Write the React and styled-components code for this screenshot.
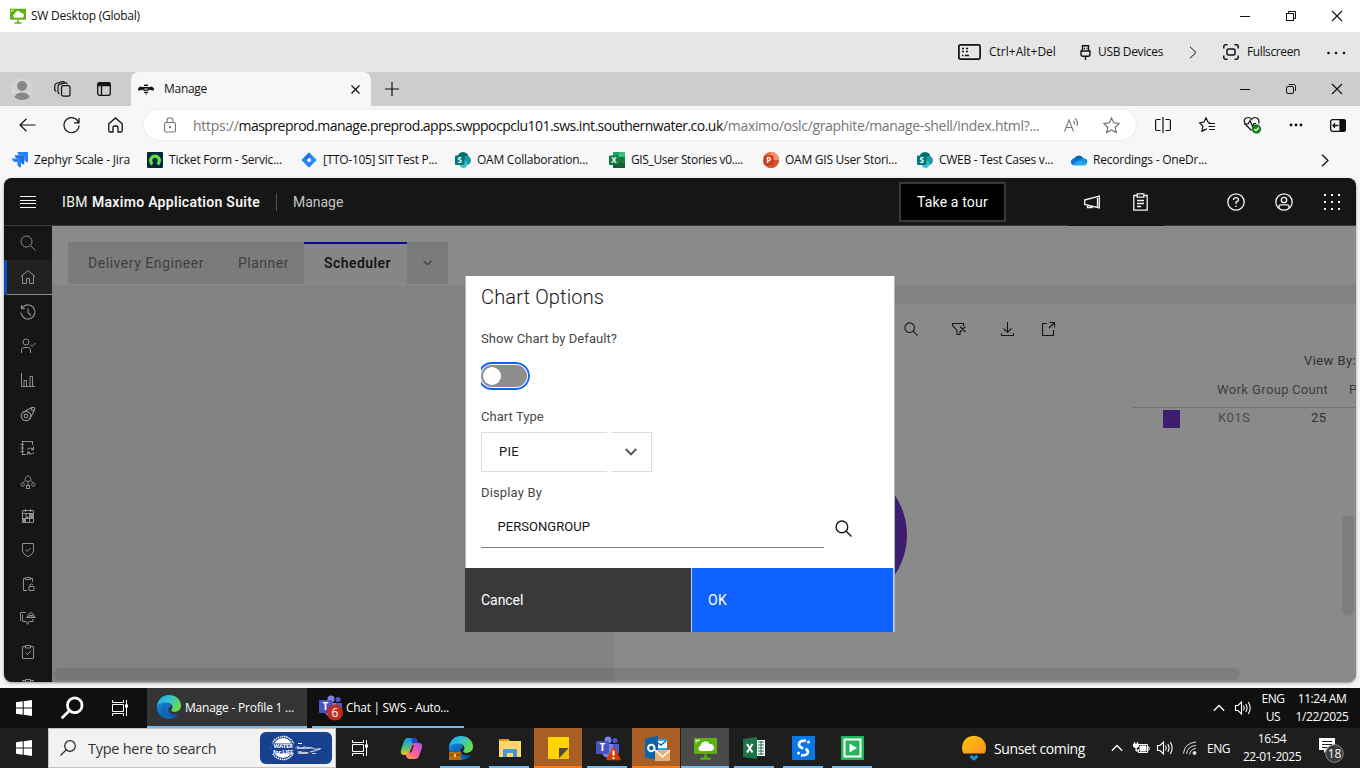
import React from 'react';
import styled, { createGlobalStyle } from 'styled-components';

const Global = createGlobalStyle`
  * { box-sizing: border-box; }
  body { margin: 0; overflow: hidden; background: #f7f7f7; }
`;
const ui = '"Open Sans", "Segoe UI", sans-serif';
const plex = 'Roboto, "IBM Plex Sans", sans-serif';

const Screen = styled.div`
  width: 1360px; height: 768px; display: flex; flex-direction: column;
  font-family: ${ui}; font-size: 12px; color: #111; overflow: hidden;
`;
const Label = styled.span`
  flex: none; display: block; white-space: nowrap;
  width: ${p => (p.$w ? p.$w + 'px' : 'auto')};
  margin-left: ${p => p.$ml || 0}px;
  padding-bottom: ${p => p.$pb || 0}px;
  letter-spacing: ${p => p.$ls || 0}px;
  font-size: ${p => p.$size || 12}px;
  font-weight: ${p => p.$weight || 400};
  color: ${p => p.$color || 'inherit'};
`;
const Cell = styled.div`
  flex: none; width: ${p => p.$w}px; height: 100%; margin-left: ${p => p.$ml || 0}px;
  display: flex; align-items: center; justify-content: center;
`;
const Spacer = styled.div`flex: 1;`;
const Svg = styled.svg`display: block; flex: none; overflow: visible; margin-left: ${p => p.$ml || 0}px;`;

function Icon({ w = 16, h = w, vb, sw = 1, color = 'currentColor', ml, children }) {
  return (
    <Svg $ml={ml} width={w} height={h} viewBox={vb || `0 0 ${w} ${h}`} fill="none" stroke={color} strokeWidth={sw}>
      {children}
    </Svg>
  );
}

/* ---------- window chrome icons ---------- */
const Minimize = () => <Icon w={10}><path d="M0 5.5H10" /></Icon>;
const Restore = ({ round }) => (
  <Icon w={10}><rect x=".5" y="2.5" width="7" height="7" rx={round ? 1.5 : 0} /><path d={round ? 'M2.8 .5H7.5Q9.5 .5 9.5 2.5V7' : 'M2.5 2.5V.5H9.5V7.5H7.5'} /></Icon>
);
const Close = () => <Icon w={10} sw={1.1}><path d="M0 0L10 10M10 0L0 10" /></Icon>;
const Citrix = ({ s = 16 }) => (
  <Icon w={s} vb="0 0 16 16">
    <path d="M0 .7h16v11H0z" fill="#5fb30f" stroke="none" />
    <path d="M4.500 9.700a1.900 1.900 0 0 1 .2-3.700A3.300 3.300 0 0 1 11 5a2.400 2.400 0 0 1 1 4.700z" fill="#fff" stroke="none" />
    <path d="M1.500 4V2.300H4" stroke="#fff" strokeWidth=".8" />
    <path d="M8 12v2.500M4.500 15h7" stroke="#5fb30f" strokeWidth="1.600" />
  </Icon>
);
const ChevronRight = () => <Icon w={8} h={13} sw={1.300}><path d="M1 .8L7 6.500L1 12.200" /></Icon>;
const ChevronUp = () => <Icon w={12} h={8} sw={1.300}><path d="M.8 6.800L6 1.500L11.200 6.800" /></Icon>;

/* ---------- Citrix window bars ---------- */
const TitleBar = styled.div`height: 32px; flex: none; background: #fff; display: flex; align-items: center; padding-left: 10px;`;
const SessionBar = styled.div`height: 40px; flex: none; background: #e6e6e6; display: flex; align-items: center; padding-left: 958px;`;

/* ---------- browser ---------- */
const TabStrip = styled.div`height: 34px; flex: none; background: #cdcdcd; display: flex; align-items: center; padding-left: 2px;`;
const Avatar = styled.div`width: 22px; height: 22px; border-radius: 50%; background: #d5d3d1; overflow: hidden;`;
const Tab = styled.div`
  width: 240px; height: 34px; margin-left: 7px; background: #f7f7f7; border-radius: 8px 8px 0 0;
  display: flex; align-items: center; padding-left: 7px;
`;
const NavBar = styled.div`height: 38px; flex: none; background: #f7f7f7; display: flex; align-items: center; padding-left: 5px;`;
const Address = styled.div`
  width: 992px; height: 30px; margin: 0 5px 0 7px; border-radius: 15px; background: #fff;
  box-shadow: 0 0 3px rgba(0,0,0,.1); display: flex; align-items: center; padding-left: 18px; color: #767676;
`;
const Bookmarks = styled.div`height: 34px; flex: none; background: #f7f7f7; display: flex; align-items: center; padding: 0 0 2px 12px;`;
const Bookmark = styled.div`width: ${p => p.$w || 154}px; display: flex; align-items: center; gap: 6px;`;

const JiraScale = () => (
  <Icon w={16}><g stroke="none" fill="#2684ff"><path d="M5.500 0H16V10.400A4 4 0 0 1 12.200 6.600V3.800H9.500A4 4 0 0 1 5.500 0z" /><path d="M2.700 3.300H12.200V12.600A4 4 0 0 1 8.700 9V6.900H6.500A4 4 0 0 1 2.700 3.300z" fill="#1f6fe5" /><path d="M0 6.500H9V15.500A4 4 0 0 1 5.400 12V10.100H3.500A4 4 0 0 1 0 6.500z" /></g></Icon>
);
const TicketLogo = () => (
  <Icon w={16}><rect width="16" height="16" rx="1" fill="#04283a" stroke="none" /><path d="M5.500 12.200A4.400 4.400 0 1 1 10.500 12.200" stroke="#63df4e" strokeWidth="3.200" /></Icon>
);
const JiraDiamond = () => (
  <Icon w={16}><path d="M8 .3L15.700 8L8 15.700L.3 8z" fill="#2684ff" stroke="none" /><path d="M8 5.500L10.500 8L8 10.500L5.500 8z" fill="#fff" stroke="none" /><path d="M8 1.500V5.500L5.500 8L4 6.500z" fill="#1868db" stroke="none" /></Icon>
);
const Letter = styled.text`font: 700 ${p => p.$s || 8}px ${ui}; fill: #fff; stroke: none; text-anchor: middle;`;
const SharePoint = () => (
  <Icon w={16}><g stroke="none"><circle cx="8" cy="5.500" r="5.500" fill="#036c70" /><circle cx="11.500" cy="8.500" r="4.500" fill="#1a9ba1" /><circle cx="8.500" cy="12.300" r="3.700" fill="#37c6d0" /><rect y="3.500" width="9.500" height="9.500" rx=".8" fill="#03787c" /></g><Letter x="4.800" y="11.200">S</Letter></Icon>
);
const Excel = () => (
  <Icon w={16}><g stroke="none"><path d="M4 0h12v16H4z" fill="#21a366" /><path d="M10 0h6v5h-6z" fill="#33c481" /><path d="M4 11h12v5H4z" fill="#185c37" /><path d="M10 5h6v6h-6z" fill="#107c41" /><rect y="3.500" width="9.500" height="9.500" rx=".8" fill="#107c41" /></g><Letter x="4.800" y="11.200">X</Letter></Icon>
);
const PowerPoint = () => (
  <Icon w={16}><g stroke="none"><circle cx="8" cy="8" r="8" fill="#ed6c47" /><path d="M8 0a8 8 0 0 1 8 8H8z" fill="#ff8f6b" /><path d="M0 8h16A8 8 0 0 1 0 8z" fill="#d35230" /><rect x="1" y="3.500" width="9.500" height="9.500" rx=".8" fill="#c43e1c" /></g><Letter x="5.800" y="11.200">P</Letter></Icon>
);
const OneDrive = () => (
  <Icon w={16}><g stroke="none"><path d="M1.500 11a3.500 3.500 0 0 1 2-5A5 5 0 0 1 12.300 6.200L12 9z" fill="#0364b8" /><path d="M7 8L12.500 6.200a3.500 3.500 0 0 1 3 5.800z" fill="#1490df" /><path d="M2.800 13.500A2.600 2.600 0 0 1 1 9.500L7.500 8L15.500 11.700A2.600 2.600 0 0 1 13.500 13.500z" fill="#28a8ea" /><path d="M.5 12a3.500 3.500 0 0 1 3-5.500L8 8.200L2 12.800z" fill="#0a78d4" /></g></Icon>
);
const bookmarks = [
  [JiraScale, 'Zephyr Scale - Jira', -0.16, 135],
  [TicketLogo, 'Ticket Form - Servic...', -0.21],
  [JiraDiamond, '[TTO-105] SIT Test P...', -0.29],
  [SharePoint, 'OAM Collaboration...', -0.24],
  [Excel, 'GIS_User Stories v0....', -0.36],
  [PowerPoint, 'OAM GIS User Stori...', -0.25],
  [SharePoint, 'CWEB - Test Cases v...', -0.3],
  [OneDrive, 'Recordings - OneDr...', -0.22],
];

/* ---------- Maximo application ---------- */
const Viewport = styled.div`height: 510px; flex: none; background: #f4f4f4; padding: 0 4px;`;
const Application = styled.div`
  height: 504px; border-radius: 8px; overflow: hidden; background: #8a8a8a; font-family: ${plex};
  box-shadow: 0 1px 3px rgba(0,0,0,.4); position: relative;
`;
const Header = styled.div`height: 48px; background: #161616; box-shadow: inset 0 -1px #393939; color: #f4f4f4; display: flex; align-items: center;`;
const HeaderAction = styled(Cell)`width: 48px; background: ${p => (p.$solid ? '#161616' : 'transparent')};`;
const Divider = styled.div`width: 1px; height: 18px; background: #525252; margin-left: 16px;`;
const TourButton = styled.div`
  width: 107px; height: 40px; border: 2px solid #393939; background: #000; color: #fff;
  display: flex; align-items: center; padding-left: 16px; margin-left: 556px;
`;
const Body = styled.div`display: flex; height: 456px;`;
const Sidebar = styled.div`width: 48px; flex: none; background: #161616; color: #8f8f8f; overflow: hidden;`;
const SideItem = styled.div`
  height: ${p => (p.$active ? 35 : 34)}px; display: flex; align-items: center; justify-content: center;
  padding-bottom: ${p => (p.$active ? 2 : 0)}px;
  background: ${p => (p.$active ? '#212121' : 'transparent')};
  box-shadow: ${p => (p.$active ? 'inset 3px 0 #0f4bc0, inset 0 -1px #8d8d8d' : 'none')};
`;
const Content = styled.div`flex: 1; min-width: 0; background: #828282; position: relative; display: flex; flex-direction: column;`;
const TabArea = styled.div`height: 59px; flex: none; background: #8a8a8a; padding: 16px 0 0 16px;`;
const TabRow = styled.div`width: 380px; height: 42px; display: flex; background: #7b7b7b;`;
const PageTab = styled.div`
  width: ${p => p.$w}px; height: 42px; display: flex; align-items: center; padding: 0 0 2px 20px;
  color: ${p => (p.$active ? '#161616' : '#3f3f3f')};
  background: ${p => (p.$active ? '#868686' : 'transparent')};
  border-top: 2px solid ${p => (p.$active ? '#080899' : 'transparent')};
`;
const Panels = styled.div`flex: 1; display: flex; padding-top: 19px;`;
const LeftPanel = styled.div`width: 562px; flex: none;`;
const ChartPanel = styled.div`flex: 1; min-width: 0; background: #8a8a8a; overflow: hidden;`;
const ChartTools = styled.div`height: 50px; display: flex; color: #161616; padding-left: 286px;`;
const ChartArea = styled.div`display: flex; height: 328px;`;
const PieBox = styled.div`width: 518px; flex: none; padding: 110px 0 0 150.5px;`;
const Pie = styled.div`width: 142px; height: 142px; border-radius: 50%; background: #3f1d70;`;
const Legend = styled.div`width: 224px; overflow: hidden; color: #303030; font-size: 13px;`;
const ViewBy = styled.div`height: 15px; display: flex; align-items: center; padding: 0 0 2px 172px; margin-bottom: 13px;`;
const LegendHead = styled.div`height: 26px; display: flex; align-items: center; padding: 0 0 10px 85px; border-bottom: 1px solid #757575; margin-top: 2px; color: #3d3d3d;`;
const LegendRow = styled.div`height: 22px; display: flex; align-items: center; padding-left: 31px;`;
const Swatch = styled.div`width: 17px; height: 18px; background: #3f1d70;`;
const HScroll = styled.div`position: absolute; left: 2px; bottom: 2px; width: 1186px; height: 12px; border-radius: 6px; background: rgba(0,0,0,.09);`;
const VScroll = styled.div`position: absolute; right: 2px; top: 289px; width: 12px; height: 101px; border-radius: 6px; background: rgba(0,0,0,.09);`;

const Dialog = styled.div`
  position: absolute; left: 461px; top: 98px; width: 430px; height: 356px; background: #fff;
  border: solid #b5b5b5; border-width: 0 1px; display: flex; flex-direction: column;
`;
const DialogBody = styled.div`height: 292px; padding: 6px 0 0 15px;`;
const DialogTitle = styled.div`height: 30px; display: flex; align-items: center; color: #161616;`;
const FieldLabel = styled.div`height: 20px; display: flex; align-items: center; color: #484848; margin-top: ${p => p.$mt}px;`;
const Toggle = styled.div`
  width: 49px; height: 28px; margin-top: 14px; overflow: hidden; border-radius: 0 14px 14px 0;
  display: flex; justify-content: flex-end;
`;
const ToggleTrack = styled.div`
  flex: none; width: 52px; height: 28px; border-radius: 14px; border: 2px solid #0f62fe; padding: 1px;
`;
const ToggleFill = styled.div`height: 22px; border-radius: 11px; background: #8d8d8d; padding: 2px 0 0 1px;`;
const Knob = styled.div`width: 18px; height: 18px; border-radius: 50%; background: #fff; margin-left: 1px;`;
const SelectBox = styled.div`width: 171px; height: 40px; margin-top: 6px; display: flex; gap: 4px;`;
const SelectValue = styled.div`width: 126px; border: 1px solid #dcdcdc; border-right: 0; display: flex; align-items: center; padding: 0 0 2px 17px; color: #161616;`;
const SelectArrow = styled.div`width: 41px; border: 1px solid #dcdcdc; border-left: 0; display: flex; align-items: center; justify-content: center; color: #525252;`;
const Lookup = styled.div`display: flex; margin-top: 6px; align-items: center; color: #161616;`;
const LookupInput = styled.div`width: 343px; height: 40px; border-bottom: 1px solid #7d7d7d; display: flex; align-items: center; padding: 0 0 3px 16.5px;`;
const DialogFooter = styled.div`height: 64px; display: flex; gap: 1px; margin-left: -1px; background: #b9cff8;`;
const DialogButton = styled.div`
  width: ${p => p.$w}px; padding: 0 0 1px 16px; display: flex; align-items: center; color: #fff;
  background: ${p => (p.$primary ? '#0f62fe' : '#393939')};
`;

const Search = ({ s = 16, sw = 1 }) => <Icon w={s} vb="0 0 16 16" sw={sw}><circle cx="6.500" cy="6.500" r="5.500" /><path d="M10.500 10.500L15.500 15.500" /></Icon>;
const sideIcons = [
  <Search />,
  <Icon w={16}><path d="M1 7.500L8 1.500L15 7.500M2.500 6.500V14.500H6.500V9.500H9.500V14.500H13.500V6.500" /></Icon>,
  <Icon w={16} sw={1.200}><path d="M2.200 4A7 7 0 1 1 1 8.500M1.500 1V4.500H5M8 4.500V8.500L11 11.500" /></Icon>,
  <Icon w={16}><circle cx="6" cy="4" r="3" /><path d="M1.500 15V12Q1.500 9.500 4 9.500H8Q10.500 9.500 10.500 12V15M10 6.500L12 8.500L15.500 5" /></Icon>,
  <Icon w={16}><path d="M1.500 1V14.500H15M4 14V8.500H6.500V14M10 14V4.500H12.500V14" /></Icon>,
  <Icon w={16} sw={1.200}><circle cx="6" cy="10" r="4.700" /><circle cx="6" cy="10" r="1.800" /><circle cx="13" cy="3" r="1.700" /><path d="M3 6.300L11.700 1.500M9.600 13L14.500 4" /></Icon>,
  <Icon w={16} sw={1.100}><path d="M12.500 5V1.500H2.500V14.500H6M.5 4.500H4M.5 8H4M.5 11.500H4M7.500 9.500Q10 6.500 13.300 9.500M13.500 6.500V9.800H11M14 12.500Q11.500 15.500 8 12.500M7.700 15V12H10" /></Icon>,
  <Icon w={16}><path d="M5 5.500Q5 3.500 8 1.500Q11 3.500 11 5.500Q10 7.500 8 7.500Q5.500 7.500 5 5.500M8 7.500V11M5 6.500L3.500 8.500M11 6.500L12.500 8.500" /><circle cx="2.700" cy="10.500" r="1.700" /><circle cx="13.300" cy="10.500" r="1.700" /><rect x="6.500" y="11.500" width="3" height="3" /></Icon>,
  <Icon w={16}><path d="M2.500 2.500H13.500V14.500H2.500zM5.500 1V4M10.500 1V4M2.500 5.500H13.500" /><path d="M9 6h4v5H9zM5.500 8.500h3v2h-3zM3 11h3v3H3z" fill="currentColor" stroke="none" /><path d="M3 10.500H13M6 6V8M9.500 11V14" /></Icon>,
  <Icon w={16}><path d="M2.500 1.500H13.500V9Q13 12.500 8 14.700Q3 12.500 2.500 9zM5.500 7.500L7.300 9.300L10.500 6" /></Icon>,
  <Icon w={16}><path d="M5.500 2.500H3.500V14.500H7M10.500 2.500H12.500V6M5.500 1.500H10.500V3.500H5.500zM9 10.500H14V14.500H9zM10 10V8.700Q11.500 7 13 8.700" /></Icon>,
  <Icon w={16}><path d="M6 2.500H.5V11M2.500 4.500V11.500H6.500L7.500 14.500L9 11.500H13V9M6 7.500H15.500M7.500 7Q7.500 3.500 11 2.500Q14 3.500 14.500 7zM9 5.500H13" /></Icon>,
  <Icon w={16}><path d="M5 2.500H2.500V14.500H13.500V2.500H11M5.500 1.500H10.500V4H5.500zM5.500 8.500L7.300 10.500L11 7" /></Icon>,
  <Icon w={16}><path d="M5 2.500H2.500V14.500H13.500V2.500H11M5.500 1.500H10.500V4H5.500z" /></Icon>,
];

/* ---------- taskbars ---------- */
const Taskbar = styled.div`height: 40px; flex: none; display: flex; align-items: center; color: #fff; background: ${p => p.$bg};`;
const TaskButton = styled.div`
  width: ${p => p.$w}px; height: 40px; margin-left: ${p => p.$ml}px; display: flex; align-items: center; padding-left: ${p => p.$pl}px;
  background: ${p => (p.$active ? '#343434' : 'transparent')}; border-bottom: 2px solid #76b9ed;
`;
const PinnedApp = styled.div`
  width: 49px; height: 40px; flex: none; display: flex; align-items: center; justify-content: center; position: relative;
  background: linear-gradient(to right, ${p => p.$bg || 'transparent'} 48px, transparent 48px);
  &::after {
    content: ''; position: absolute; bottom: 0; height: 2px;
    left: ${p => (p.$bg ? 0 : 4)}px; right: ${p => (p.$bg ? 1 : 5)}px; background: ${p => p.$line || 'transparent'};
  }
`;
const SearchBox = styled.div`
  width: 288px; height: 40px; background: #f2f2f2; border: 1px solid #c4c4c4; color: #333;
  display: flex; align-items: center; padding-left: 11px;
`;
const WaterBadge = styled.div`
  width: 72px; height: 32px; border-radius: 6px; background: #17418f; margin-left: 44px; display: flex; align-items: center; padding-left: 10px;
`;
const Stack = styled.div`
  width: ${p => p.$w}px; margin-left: ${p => p.$ml || 0}px; flex: none; line-height: 18px; text-align: center;
  letter-spacing: -.45px; white-space: nowrap; display: flex; flex-direction: column; align-items: center;
`;
const Count = styled.text`font: 12px ${ui}; fill: #fff; stroke: none; text-anchor: middle;`;
const Tiny = styled.text`font: 700 ${p => p.$s}px ${ui}; letter-spacing: -.3px; fill: #fff; stroke: none; text-anchor: middle;`;

const Windows = () => <Icon w={16}><path stroke="none" fill="#fff" d="M0 2.300L6.700 1.300V7.500H0zM7.700 1.200L16 0V7.500H7.700zM0 8.500H6.700V14.700L0 13.700zM7.700 8.500H16V16L7.700 14.800z" /></Icon>;
const TaskView = () => <Icon w={16} color="#fff"><path d="M.5 0V2.500H11.500V0M.5 16V13.500H11.500V16M.5 4.500H11.500V11.500H.5zM14.500 0V16" /><path d="M14.500 4.500V7.500" strokeWidth="3" /></Icon>;
const Magnifier = ({ s, sw, color }) => <Icon w={s} vb="0 0 16 16" sw={sw} color={color}><circle cx="10" cy="6" r="5.300" /><path d="M6.200 9.800L.5 15.500" /></Icon>;
const Edge = ({ s = 24, brief }) => (
  <Icon w={s} vb="0 0 24 24">
    <defs>
      <linearGradient id="edgeTop" x1="0" y1="0" x2="1" y2=".5"><stop offset="0" stopColor="#1ca4e8" /><stop offset=".5" stopColor="#32c4cf" /><stop offset="1" stopColor="#68dd4b" /></linearGradient>
      <linearGradient id="edgeLow" x1="0" y1="0" x2="1" y2="1"><stop offset="0" stopColor="#1b8fde" /><stop offset="1" stopColor="#0b4ea2" /></linearGradient>
    </defs>
    <g stroke="none">
      <path d="M12 0A12 12 0 1 0 22 18.500Q20 19.800 17.500 19.500L14 12z" fill="url(#edgeLow)" />
      <path d="M.3 10.500C1.300 4 6.500 0 12 0c7 0 12 5 12 10.500 0 4-3 6.500-6.500 6.500-3 0-4-1-3-2.500C17 11 14 7.500 9.500 7.500 5 7.500 1 9 .3 10.500z" fill="url(#edgeTop)" />
      <path d="M9.300 10C6 14 8 22 16.500 22.500 12 25 5.500 23 4.200 17.500 3.500 13.500 6 10.500 9.300 10z" fill="#1267b4" />
      <path d="M14.500 14.500C13.500 16 14.500 17 17.500 17c2.500 0 4.500-.8 5.500-2 0 0-.5 4-5 4.500-4.500.3-7-3-6.500-5.500.3-2 1.500-2.500 2.500-2 .8.600 1 1.500.5 2.500z" fill={brief ? '#1e1e1e' : '#343434'} />
      {brief && <><rect y="16" width="12" height="8" fill="#b86a0c" /><path d="M0 18.500h12v1H0z" fill="#7d4300" /><path d="M5 18h2v3H5z" fill="#ffd04a" /></>}
    </g>
  </Icon>
);
const Teams = ({ warn }) => (
  <Icon w={24}>
    <g stroke="none">
      <circle cx="12" cy="4" r="3.500" fill="#7b83eb" /><circle cx="19" cy="4.500" r="2.500" fill="#5059c9" />
      <path d="M15 8h8v6a4 4 0 0 1-8 2z" fill="#5059c9" /><path d="M6 8h11v8a5.500 5.500 0 0 1-11 0z" fill="#7b83eb" />
      <rect y="5" width="13" height="13" rx="1" fill="#4b53bc" />
    </g>
    <Letter x="6.500" y="15" $s={10}>T</Letter>
    {warn
      ? <><path d="M17.500 11.500L24 23.500H11z" fill="#d83b01" stroke="#d83b01" strokeWidth="1.500" strokeLinejoin="round" /><path d="M17.500 14.500V19.500M17.500 21V23" stroke="#fff" strokeWidth="2" /></>
      : <><circle cx="16" cy="17.500" r="8" fill="#c42b1c" stroke="none" /><Count x="16" y="22">6</Count></>}
  </Icon>
);
const Speaker = () => <Icon w={17} h={14} color="#fff" sw={1.100}><path d="M.5 4.500H3L6.500 1V13L3 9.500H.5zM8.500 4.500Q10 7 8.500 9.500M10.800 3Q13.200 7 10.800 11M13.300 1Q17 7 13.300 13" /></Icon>;
const Copilot = () => (
  <Icon w={23}><defs>
    <linearGradient id="cpA" x1="0" y1="0" x2="0" y2="1"><stop offset="0" stopColor="#1b8df0" /><stop offset=".5" stopColor="#36c38b" /><stop offset="1" stopColor="#f3c21c" /></linearGradient>
    <linearGradient id="cpB" x1="1" y1="0" x2="0" y2="1"><stop offset="0" stopColor="#a94df2" /><stop offset=".5" stopColor="#f2609a" /><stop offset="1" stopColor="#ff9a4a" /></linearGradient></defs>
    <g stroke="none"><path d="M7 1H14q2 0 3 3l1 3h-4q-2 0-3 3l-2 6q-1 2-4 2H3q-3-1-2-5L4 4q1-3 3-3z" fill="url(#cpA)" /><path d="M12 1h3q2 0 2.500 3l1 3H14q-2 0-2.500-3z" fill="#174ac5" />
      <path d="M16 22H9q-2 0-3-3l-.5-2q2.500 0 3.500-3l2-5q1-3 4-3h4q4 0 3 5l-3 8q-1 3-3 3z" fill="url(#cpB)" /><path d="M12.800 8L9.500 15.500h1.800L14 8z" fill="#1e1e1e" /></g></Icon>
);

export default function App() {
  return (
    <Screen>
      <Global />
      <TitleBar>
        <Citrix />
        <Label $ml={5} $pb={1} $ls={-0.23}>SW Desktop (Global)</Label>
        <Spacer />
        <Cell $w={46}><Minimize /></Cell><Cell $w={46}><Restore /></Cell><Cell $w={46}><Close /></Cell>
      </TitleBar>

      <SessionBar>
        <Icon w={23} h={16} sw={1.700}><rect x=".9" y=".9" width="21.200" height="14.200" rx="1.500" /><path d="M4 4.500H6M8 4.500H10M4 7.500H6M8 7.500H10M4 11.500H5.500M7 11.500H11" strokeWidth="1.500" /></Icon>
        <Label $ml={8} $w={67} $pb={2}>Ctrl+Alt+Del</Label>
        <Icon ml={24} w={11} h={15} sw={1.400}><path d="M2.500 6V.8H8.500V6M1 6H10V9Q10 11.300 8 11.300H3Q1 11.300 1 9zM5.500 11.500V15" /><path d="M4 3.500H5M6.500 3.500H7.500" /></Icon>
        <Label $ml={7} $w={65} $ls={-0.35} $pb={2}>USB Devices</Label>
        <Icon ml={26} w={8} h={13}><path d="M1 .8L7 6.500L1 12.200" /></Icon>
        <Icon ml={26} w={16} sw={1.500}><path d="M.8 4.500V2.500Q.8 .8 2.500 .8H4.500M11.500 .8H13.500Q15.200 .8 15.200 2.500V4.500M15.200 11.500V13.500Q15.200 15.200 13.500 15.200H11.500M4.500 15.200H2.500Q.8 15.200 .8 13.500V11.500" /><rect x="4" y="5" width="8" height="6" rx="1.500" /></Icon>
        <Label $ml={8} $w={53} $ls={-0.38} $pb={2}>Fullscreen</Label>
        <Icon ml={27} w={19} h={3}><g stroke="none" fill="#111"><circle cx="1.500" cy="2" r="1.300" /><circle cx="9" cy="2" r="1.300" /><circle cx="17" cy="2" r="1.300" /></g></Icon>
      </SessionBar>

      <TabStrip>
        <Cell $w={40}><Avatar><Icon w={22}><circle cx="11" cy="8" r="5" fill="#8a8886" stroke="none" /><path d="M3 22Q3 14.500 11 14.500Q19 14.500 19 22z" fill="#8a8886" stroke="none" /></Icon></Avatar></Cell>
        <Cell $w={40}><Icon w={17} h={16} sw={1.200}><rect x="7.500" y="4.700" width="8.500" height="10.500" rx="2" /><path d="M5.500 12.800Q4 12.500 4 11V5.500Q4 3.700 5.500 3.300L11.500 1.800Q13 1.600 13.300 3M2.300 10.500Q.8 10 .8 8.700V4.500Q.8 3 2.300 2.500L8.500 .7Q10 .3 10.500 1.500" /></Icon></Cell>
        <Cell $w={40} $ml={2}><Icon w={14} sw={1.300}><rect x=".7" y=".7" width="12.600" height="12.600" rx="2" /><path d="M.7 2.500H13.300" strokeWidth="3.500" /><path d="M4.500 4V13" /></Icon></Cell>
        <Tab>
          <Icon w={16}><g stroke="none" fill="#111"><path d="M0 9Q-.2 6 3 5.500L6.500 7V8.500L2 9.300Q.5 10 0 9zM16 9Q16.200 6 13 5.500L9.500 7V8.500L14 9.300Q15.500 10 16 9z" /><path d="M6.200 3L5.500 2.500M6.500 3.500h3l.7 1.500H5.800zM5 6h6v1.400H5zM5.300 8.400h5.400v1.300H5.300zM6 10.700h4v1.200H6zM7.300 12.500h1.500v1H7.300z" /></g></Icon>
          <Label $ml={10} $w={180} $ls={-0.29} $pb={1}>Manage</Label>
          <Icon ml={7} w={9} sw={1.200}><path d="M.5 .5L8.500 8.500M8.500 .5L.5 8.500" /></Icon>
        </Tab>
        <Cell $w={42}><Icon w={14} sw={1.200}><path d="M7 0V14M0 7H14" /></Icon></Cell>
        <Spacer />
        <Cell $w={46}><Minimize /></Cell><Cell $w={46}><Restore round /></Cell><Cell $w={46}><Close /></Cell>
      </TabStrip>

      <NavBar>
        <Cell $w={44}><Icon w={17} h={14} sw={1.200}><path d="M16.500 7H1M7.500 .7L1 7L7.500 13.300" /></Icon></Cell>
        <Cell $w={44}><Icon w={17} sw={1.200}><path d="M15.500 5.500A7.500 7.500 0 1 0 16 8.500M16 1V5.800H11" /></Icon></Cell>
        <Cell $w={44}><Icon w={15} h={16} sw={1.300}><path d="M.8 6.800L7.500 .9L14.200 6.800V13.500Q14.200 15 13 15H10V10.500Q10 9 8.500 9H6.500Q5 9 5 10.500V15H2Q.8 15 .8 13.500z" /></Icon></Cell>
        <Address>
          <Icon w={15} h={16} ml={1} sw={1.100}><rect x="1.500" y="5.500" width="11" height="9.500" rx="1.500" /><path d="M4 5.500V3.500Q4 .7 7 .7Q10 .7 10 3.500V5.500" /><circle cx="7" cy="10.200" r=".6" fill="#767676" /></Icon>
          <Label $ml={15} $w={45.5} $size={14} $ls={-0.28}>https://</Label>
          <Label $w={484.5} $size={14} $ls={-0.52} $color="#111">maspreprod.manage.preprod.apps.swppocpclu101.sws.int.southernwater.co.uk</Label>
          <Label $w={317} $size={14} $ls={-0.33}>/maximo/oslc/graphite/manage-shell/index.html?...</Label>
          <Icon ml={24} w={16} h={14} sw={1.100}><path d="M.5 13.500L5 2L9.500 13.500M2.200 9.500H7.800M9.500 3Q11 4.500 10.500 6.500M11 .5Q14.500 3.500 13 8" /></Icon>
          <Icon ml={23} w={17} sw={1.200}><path d="M8.500 1L10.800 5.900L16.100 6.500L12.200 10.200L13.300 15.600L8.500 12.900L3.700 15.600L4.800 10.200L.9 6.500L6.200 5.900z" /></Icon>
        </Address>
        <Cell $w={44}><Icon w={16} sw={1.200}><path d="M8 0V16M5.500 2.500H2Q.6 2.500 .6 4V12Q.6 13.500 2 13.500H5.500M10.500 2.500H14Q15.400 2.500 15.400 4V12Q15.400 13.500 14 13.500H10.500" /></Icon></Cell>
        <Cell $w={44}><Icon w={16} sw={1.200}><path d="M11 5.500L9 5L7 .8L5 5L.6 5.800L3.800 9L3 14.200L6.500 12.300M9.500 6.500H16M9.500 9.500H16M10 12.500H16" /><path d="M3 14.200L8 11.800" /></Icon></Cell>
        <Cell $w={44} $ml={1}><Icon w={18} h={18} sw={1.200}><path d="M3 9L8.500 14.500M3 9Q-.5 4 3 2Q6.500 .5 8.500 3.500Q10.500 .5 14 2Q17 4 15.500 7.500M1 8H5L7 4.500L9.500 10.500L11 7.500H13" /><circle cx="13.500" cy="13" r="4.700" fill="#13831a" stroke="none" /><path d="M11.300 13L13 14.700L15.800 11.500" stroke="#fff" /></Icon></Cell>
        <Cell $w={44}><Icon w={14} h={4}><g stroke="none" fill="#111"><circle cx="2" cy="2" r="1.400" /><circle cx="7" cy="2" r="1.400" /><circle cx="12" cy="2" r="1.400" /></g></Icon></Cell>
        <Cell $w={40}><Icon w={16} h={13} sw={1.300}><rect x=".7" y=".7" width="14.600" height="11.600" rx="2" /><path d="M10 1H14Q15.300 1 15.300 2.500V10.500Q15.300 12 14 12H10z" fill="#111" /><path d="M8.500 6.500H3M5 4.300L3 6.500L5 8.700" /></Icon></Cell>
      </NavBar>

      <Bookmarks>
        {bookmarks.map(([Logo, text, ls, w], i) => (
          <Bookmark key={i} $w={w}><Logo /><Label $ls={ls} $pb={1}>{text}</Label></Bookmark>
        ))}
        <Cell $w={16} $ml={92}><ChevronRight /></Cell>
      </Bookmarks>

      <Viewport>
        <Application>
          <Header>
            <Cell $w={48}><Icon w={16} h={14}><path d="M0 1.500H16M0 5.500H16M0 8.500H16M0 12.500H16" /></Icon></Cell>
            <Label $ml={10} $w={30} $size={14} $ls={0.42}>IBM</Label>
            <Label $w={168} $size={14} $weight={600} $ls={0.3}>Maximo Application Suite</Label>
            <Divider />
            <Label $ml={16} $w={50} $size={14} $ls={-0.02} $color="#c6c6c6">Manage</Label>
            <TourButton><Label $size={14} $ls={0.16}>Take a tour</Label></TourButton>
            <HeaderAction $ml={62} $solid><Icon w={16} h={14} sw={1.300}><path d="M.7 5L15.300 1V13L.7 9.500zM3.500 10V12.500H8V11.300M13.500 1.500V12.500" /></Icon></HeaderAction>
            <HeaderAction $solid><Icon w={15} h={18} sw={1.300}><path d="M4 2.500H.8V17.200H14.200V2.500H11M4.200 .8H10.800V4.200H4.200zM4 7.500H11M4 10.500H11M4 13.500H8" /></Icon></HeaderAction>
            <HeaderAction $ml={48}><Icon w={18} sw={1.300}><circle cx="9" cy="9" r="8.200" /><path d="M6.500 7Q6.500 4.700 9 4.700Q11.500 4.700 11.500 6.800Q11.500 8.500 9 9V11M9 12.500V14" /></Icon></HeaderAction>
            <HeaderAction><Icon w={18} sw={1.300}><circle cx="9" cy="9" r="8.200" /><circle cx="9" cy="7" r="2.700" /><path d="M4 15V13.500Q4 11.800 6 11.800H12Q14 11.800 14 13.500V15" /></Icon></HeaderAction>
            <HeaderAction><Icon w={16} sw={2}><path d="M0 1H2M7 1H9M14 1H16M0 8H2M7 8H9M14 8H16M0 15H2M7 15H9M14 15H16" /></Icon></HeaderAction>
          </Header>
          <Body>
            <Sidebar>{sideIcons.map((ic, i) => <SideItem key={i} $active={i === 1}>{ic}</SideItem>)}</Sidebar>
            <Content>
              <TabArea>
                <TabRow>
                  <PageTab $w={150}><Label $size={14} $ls={0.54}>Delivery Engineer</Label></PageTab>
                  <PageTab $w={86}><Label $size={14} $ls={0.5}>Planner</Label></PageTab>
                  <PageTab $w={103} $active><Label $size={14} $weight={600} $ls={0.43}>Scheduler</Label></PageTab>
                  <Cell $w={41}><Icon w={9} h={6} color="#161616"><path d="M.5 .8L4.500 4.800L8.500 .8" /></Icon></Cell>
                </TabRow>
              </TabArea>
              <Panels>
                <LeftPanel />
                <ChartPanel>
                  <ChartTools>
                    <Cell $w={22}><Search s={14} sw={1.200} /></Cell>
                    <Cell $w={22} $ml={26}><Icon w={15} h={14} sw={1.100}><path d="M11.500 4V1.500H.5V3.500L5 8.500V12.500H8V9M8 4.500L13.500 10M13.500 4.500L8 10" /></Icon></Cell>
                    <Cell $w={22} $ml={26}><Icon w={13} h={14} sw={1.100}><path d="M6.500 0V10M2.500 6.500L6.500 10.300L10.500 6.500M.5 11V13.500H12.500V11" /></Icon></Cell>
                    <Cell $w={22} $ml={19}><Icon w={14} sw={1.100}><path d="M6 1.500H1.500V13.500H12.500V8M8.500 .5H13.500V5.500M13.500 .5L8 6" /></Icon></Cell>
                  </ChartTools>
                  <ChartArea>
                    <PieBox><Pie /></PieBox>
                    <Legend>
                      <ViewBy><Label $size={13} $ls={0.41}>View By:</Label></ViewBy>
                      <LegendHead>
                        <Label $size={13} $w={75} $ls={0.4}>Work Group</Label>
                        <Label $size={13} $w={57} $ls={0.31}>Count</Label>
                        <Label $size={13}>P</Label>
                      </LegendHead>
                      <LegendRow><Swatch /><Label $ml={38} $w={93} $pb={3} $size={13} $ls={0.45} $color="#4a4a4a">K01S</Label><Label $size={13} $pb={3} $ls={0.44}>25</Label></LegendRow>
                    </Legend>
                  </ChartArea>
                </ChartPanel>
              </Panels>
              <HScroll /><VScroll />
            </Content>
          </Body>
          <Dialog>
            <DialogBody>
              <DialogTitle><Label $size={20} $weight={300} $ls={0.15}>Chart Options</Label></DialogTitle>
              <FieldLabel $mt={16}><Label $size={13} $ls={0.07}>Show Chart by Default?</Label></FieldLabel>
              <Toggle><ToggleTrack><ToggleFill><Knob /></ToggleFill></ToggleTrack></Toggle>
              <FieldLabel $mt={16}><Label $size={13} $ls={0.05}>Chart Type</Label></FieldLabel>
              <SelectBox>
                <SelectValue><Label $size={13} $ls={0.29}>PIE</Label></SelectValue>
                <SelectArrow><Icon w={12} h={8} sw={1.900}><path d="M.7 1L6 6.500L11.300 1" /></Icon></SelectArrow>
              </SelectBox>
              <FieldLabel $mt={10}><Label $size={13} $ls={0.15}>Display By</Label></FieldLabel>
              <Lookup>
                <LookupInput><Label $size={13} $ls={0.05}>PERSONGROUP</Label></LookupInput>
                <Cell $w={38}><Search s={17} sw={1.300} /></Cell>
              </Lookup>
            </DialogBody>
            <DialogFooter>
              <DialogButton $w={226}><Label $size={14} $ls={-0.05}>Cancel</Label></DialogButton>
              <DialogButton $primary $w={201}><Label $size={14} $ls={0.29}>OK</Label></DialogButton>
            </DialogFooter>
          </Dialog>
        </Application>
      </Viewport>

      <Taskbar $bg="#101010">
        <Cell $w={48}><Windows /></Cell>
        <Cell $w={48}><Magnifier s={22} sw={2} color="#fff" /></Cell>
        <Cell $w={48}><TaskView /></Cell>
        <TaskButton $w={160} $ml={3} $pl={10} $active><Edge /><Label $ml={4} $ls={-0.21}>Manage - Profile 1 ...</Label></TaskButton>
        <TaskButton $w={152} $ml={5} $pl={7}><Teams /><Label $ml={3} $ls={-0.3}>Chat | SWS - Auto...</Label></TaskButton>
        <Spacer />
        <Cell $w={16}><ChevronUp /></Cell>
        <Cell $w={20} $ml={6}><Speaker /></Cell>
        <Stack $w={30} $ml={5}><span>ENG</span><span>US</span></Stack>
        <Stack $w={56} $ml={6}><span>11:24 AM</span><span>1/22/2025</span></Stack>
        <Cell $w={10} />
      </Taskbar>

      <Taskbar $bg="#1e1e1e">
        <Cell $w={48}><Windows /></Cell>
        <SearchBox>
          <Magnifier s={16} sw={1.200} color="#222" />
          <Label $ml={12} $w={128} $size={14.5} $ls={-0.27}>Type here to search</Label>
          <WaterBadge>
            <Icon w={52} h={26}>
              <circle cx="13" cy="13" r="11.500" stroke="#fff" strokeDasharray="1.500 .7" strokeWidth="1.500" /><circle cx="13" cy="13" r="10" fill="#fff" stroke="none" />
              <path d="M1 8.500h24v10H1z" fill="#17418f" stroke="none" />
              <Tiny x="13" y="13" $s={6}>WATER</Tiny><Tiny x="13" y="18.500" $s={6}>for LIFE</Tiny>
              <path d="M28 8.500H32" stroke="#fff" /><Tiny x="34.500" y="14" $s={4}>Southern</Tiny><Tiny x="33" y="18.500" $s={4}>Water</Tiny>
              <path d="M40 17Q46 16 51 13.500M43 14H50M42 18.500H46" stroke="#fff" strokeWidth=".8" />
            </Icon>
          </WaterBadge>
        </SearchBox>
        <Cell $w={47}><TaskView /></Cell>
        <Cell $w={4} />
        <PinnedApp><Copilot /></PinnedApp>
        <PinnedApp $line="#76b9ed"><Edge brief /></PinnedApp>
        <PinnedApp $line="#76b9ed"><Icon w={22} h={20}><g stroke="none"><path d="M0 1h9l2 2h11v16H0z" fill="#ffd767" /><path d="M0 1h8l2 2H0z" fill="#d99a15" /><path d="M4 19v-8h14v8h-4v-4H8v4z" fill="#3f9ae0" /></g></Icon></PinnedApp>
        <PinnedApp $bg="#a85e25" $line="#ff7a10"><Icon w={21} h={22}><path d="M0 0h21v22H0z" fill="#ffd400" stroke="none" /><path d="M11 21.500V11H21z" fill="#4a4a3a" stroke="none" /><path d="M21 11V22H10.500z" fill="#f0c000" stroke="none" /></Icon></PinnedApp>
        <PinnedApp $line="#76b9ed"><Teams warn /></PinnedApp>
        <PinnedApp $bg="#a85e25" $line="#ff7a10"><Icon w={24}><g stroke="none"><path d="M9 3h13v14H9z" fill="#28a8ea" /><path d="M11 5h11v7H11z" fill="#fff" /><path d="M0 2.500L13 0v24L0 21.500z" fill="#0a64ad" /><path d="M10 14h15v11H10z" fill="#e7b174" /></g><path d="M10 14L17.500 21L25 14" stroke="#fff" strokeWidth="1.500" /><circle cx="6.300" cy="12" r="3.200" stroke="#fff" strokeWidth="2" /><path d="M13 7L16 9L21 5" stroke="#0a64ad" strokeWidth="1.500" /></Icon></PinnedApp>
        <PinnedApp $bg="#4a4a4a" $line="#76b9ed"><Citrix s={23} /></PinnedApp>
        <PinnedApp $line="#76b9ed"><Icon w={23} h={22}><g stroke="none"><path d="M11 3h11v16H11z" fill="#fff" /><path d="M0 2L14 0v22L0 20z" fill="#1f7246" /></g><path d="M15 5H21M15 8H21M15 11H21M15 14H21M15 17H21M18 4V18" stroke="#1f7246" /><path d="M4 7L9.500 15.500M9.500 7L4 15.500" stroke="#fff" strokeWidth="2" /></Icon></PinnedApp>
        <PinnedApp $line="#76b9ed"><Icon w={23} h={24}><path d="M0 0h23v24H0z" fill="#0877e8" stroke="none" /><path d="M14 4.500Q7 4.500 7 8.500Q7 11.500 12 12.500Q16 13.500 16 16Q16 19.500 9 19.500" stroke="#fff" strokeWidth="2.600" strokeDasharray="15 2 20" /><circle cx="16.500" cy="6" r="1.500" fill="#fff" stroke="none" /><circle cx="6.500" cy="17" r="1.500" fill="#fff" stroke="none" /></Icon></PinnedApp>
        <PinnedApp $line="#76b9ed"><Icon w={23} h={24}><path d="M0 0h23v24H0z" fill="#22b65a" stroke="none" /><path d="M3.500 3.500h16v17h-16z" stroke="#fff" strokeWidth="2" /><path d="M8.500 7.500L16 12L8.500 16.500z" fill="#fff" stroke="none" /></Icon></PinnedApp>
        <Spacer />
        <Icon w={24} h={25}><defs><linearGradient id="sun" x1="0" y1="0" x2="1" y2="1"><stop offset="0" stopColor="#ffc400" /><stop offset="1" stopColor="#f79427" /></linearGradient></defs><path d="M1.500 17.500A12 12 0 1 1 22.500 17.500z" fill="url(#sun)" stroke="none" /><path d="M8.500 20L12 22.800L15.500 20" stroke="#1493e0" strokeWidth="3" /></Icon>
        <Label $ml={8} $w={91} $size={14} $ls={-0.37}>Sunset coming</Label>
        <Cell $w={16} $ml={24}><ChevronUp /></Cell>
        <Cell $w={18} $ml={7}><Icon w={17} h={12} color="#fff"><path d="M6 2.500H14.500V10.500H5.500V7M14.500 5H16V8H14.500" /><path d="M7 4h6v5H7z" fill="#fff" /><path d="M1.500 0V2M4.500 0V2M.5 2H5.500V4.500Q3 7 .5 4.500zM3 6V9H5" fill="#fff" /></Icon></Cell>
        <Cell $w={20} $ml={5}><Speaker /></Cell>
        <Cell $w={16} $ml={7}><Icon w={14} h={14} color="#ddd"><path d="M.5 12.500Q1.500 2 13 1M3.500 13Q4.500 5 13 4.500M6.500 13.500Q7.500 8 13 7.500" /><circle cx="11.500" cy="12" r="1.500" fill="#fff" /></Icon></Cell>
        <Label $ml={9} $w={24} $ls={-0.48}>ENG</Label>
        <Stack $w={62} $ml={10}><span>16:54</span><span>22-01-2025</span></Stack>
        <Cell $w={26} $ml={15}><Icon w={26} h={26}><path d="M1 3h16v12h-8l-3 3v-3H1z" fill="#fff" stroke="none" /><path d="M4 6.500H14M4 9.500H14M4 12.500H9" stroke="#1e1e1e" /><circle cx="16.500" cy="18.500" r="8.800" fill="#3b3b3b" stroke="#888" /><Count x="16.500" y="23">18</Count></Icon></Cell>
        <Cell $w={16} />
      </Taskbar>
    </Screen>
  );
}
